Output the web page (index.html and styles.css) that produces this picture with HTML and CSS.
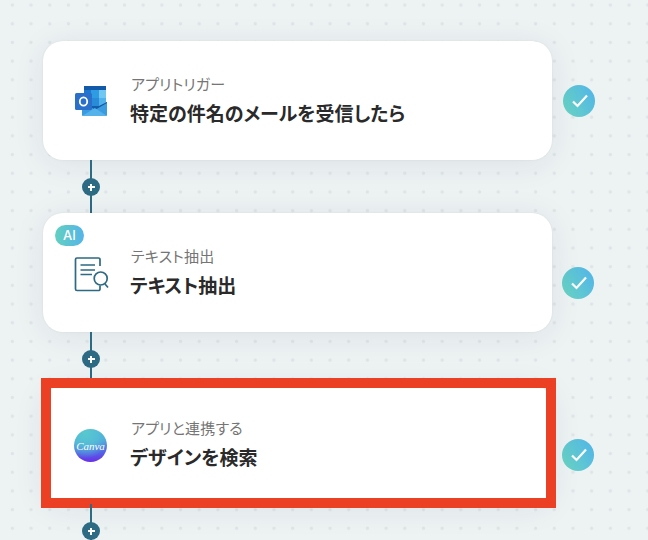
FILE: index.html
```html
<!DOCTYPE html>
<html lang="ja">
<head>
    <meta charset="UTF-8">
    <meta name="viewport" content="width=device-width, initial-scale=1.0">
    <title>フロー</title>
    <link rel="stylesheet" href="styles.css">
</head>
<body>
    <div class="flow">
        <div class="step">
            <div class="card">
                <svg class="icon" viewBox="0 0 36 36">
                    <rect x="12" y="3" width="22" height="29" rx="1" fill="#0f5fb0"/>
                    <rect x="12" y="3" width="22" height="4" fill="#1259a8"/>
                    <rect x="12" y="7" width="7" height="8" fill="#1f78cf"/>
                    <rect x="19" y="7" width="8" height="8" fill="#2f9be2"/>
                    <rect x="27" y="7" width="7" height="8" fill="#6fc7f2"/>
                    <rect x="12" y="15" width="7" height="8" fill="#1a6bbd"/>
                    <rect x="19" y="15" width="8" height="8" fill="#2a8bd8"/>
                    <rect x="27" y="15" width="7" height="8" fill="#4fb2ec"/>
                    <path d="M10 18 L22 26 L35 19 V32 a1 1 0 0 1 -1 1 H11 a1 1 0 0 1 -1 -1 Z" fill="#3a9be0"/>
                    <path d="M10 33 L23 25 L35 33 Z" fill="#55b2ea"/>
                    <path d="M23 25 L35 19 V20 L24.5 26 Z" fill="#15589e"/>
                    <rect x="3" y="10" width="17" height="17" rx="1.5" fill="#2a6fc9"/>
                    <ellipse cx="11.5" cy="18.5" rx="3.7" ry="4.2" fill="none" stroke="#fff" stroke-width="1.8"/>
                </svg>
                <div class="text">
                    <div class="label">アプリトリガー</div>
                    <div class="title">特定の件名のメールを受信したら</div>
                </div>
            </div>
            <div class="check check-first">
                <svg viewBox="0 0 32 32"><path d="M10 16.5 L14.5 21 L24 10.5" fill="none" stroke="#fff" stroke-width="2.2"/></svg>
            </div>
        </div>
        <div class="link"><span class="plus"></span></div>

        <div class="step">
            <div class="card">
                <span class="badge">AI</span>
                <svg class="icon" viewBox="0 0 36 36">
                    <path d="M28 11 V4.5 a1.5 1.5 0 0 0 -1.5 -1.5 H5 a1.5 1.5 0 0 0 -1.5 1.5 V34 a1.5 1.5 0 0 0 1.5 1.5 H26.5 a1.5 1.5 0 0 0 1.5 -1.5 V30.5" fill="none" stroke="#2d6a83" stroke-width="1.7"/>
                    <path d="M8.5 10 H23 M8.5 15 H23 M8.5 19.5 H20" fill="none" stroke="#2d6a83" stroke-width="1.7"/>
                    <circle cx="28.7" cy="23.5" r="6.5" fill="none" stroke="#2d6a83" stroke-width="1.7"/>
                    <path d="M33 29 L36 32.5" fill="none" stroke="#2d6a83" stroke-width="1.7"/>
                </svg>
                <div class="text">
                    <div class="label">テキスト抽出</div>
                    <div class="title">テキスト抽出</div>
                </div>
            </div>
            <div class="check">
                <svg viewBox="0 0 32 32"><path d="M10 16.5 L14.5 21 L24 10.5" fill="none" stroke="#fff" stroke-width="2.2"/></svg>
            </div>
        </div>
        <div class="link"><span class="plus"></span></div>

        <div class="step">
            <div class="card">
                <div class="canva"><span>Canva</span></div>
                <div class="text">
                    <div class="label">アプリと連携する</div>
                    <div class="title">デザインを検索</div>
                </div>
                <div class="highlight"></div>
            </div>
            <div class="check">
                <svg viewBox="0 0 32 32"><path d="M10 16.5 L14.5 21 L24 10.5" fill="none" stroke="#fff" stroke-width="2.2"/></svg>
            </div>
        </div>
        <div class="link"><span class="plus"></span></div>
    </div>
</body>
</html>
```
FILE: styles.css
```css
html, body {
    height: 100%;
}
body {
    margin: 0;
    overflow: hidden;
    font-family: "Noto Sans CJK JP", "Noto Sans", sans-serif;
    background-color: #edf2f3;
    background-image: radial-gradient(circle, #dfe5e7 1.2px, transparent 2.2px);
    background-size: 18.7px 18.7px;
    background-position: 3px -4.3px;
}
.flow {
    padding: 41px 0 0 43px;
}
.step {
    display: flex;
    align-items: flex-start;
}
.card {
    position: relative;
    width: 509px;
    height: 119px;
    box-sizing: border-box;
    padding-left: 29px;
    display: flex;
    align-items: center;
    gap: 22px;
    background: #fff;
    border-radius: 20px;
    box-shadow: 0 0 2px rgba(40, 70, 80, 0.09), 0 4px 32px rgba(40, 70, 80, 0.08);
}
.icon {
    width: 36px;
    height: 36px;
    flex: none;
    overflow: visible;
}
.text {
    display: flex;
    flex-direction: column;
    gap: 6px;
    padding-bottom: 1px;
}
.label {
    padding-left: 1px;
    font-size: 15px;
    line-height: 20px;
    letter-spacing: 0.2px;
    color: #757575;
    font-feature-settings: "palt";
}
.title {
    font-size: 19px;
    line-height: 26px;
    font-weight: 700;
    color: #2a2a2a;
    font-feature-settings: "palt";
}
.badge {
    position: absolute;
    left: 12px;
    top: 12px;
    width: 29px;
    height: 21px;
    border-radius: 11px;
    background: linear-gradient(90deg, #62d0c0, #56b4e8);
    color: #fff;
    font-family: "Inter", sans-serif;
    font-size: 13px;
    font-weight: 500;
    line-height: 21px;
    text-align: center;
}
.canva {
    width: 33px;
    height: 33px;
    margin: 2px 1px 0 2px;
    flex: none;
    border-radius: 50%;
    background:
        radial-gradient(circle at 35% 12%, #58c9cd 0, rgba(84, 190, 214, 0.9) 35%, rgba(80, 160, 220, 0) 70%),
        linear-gradient(180deg, #4fa6dc 30%, #5560e6 72%, #6a2fe8 100%);
    display: flex;
    align-items: center;
    justify-content: center;
}
.canva span {
    font-family: "Liberation Serif", serif;
    font-style: italic;
    font-size: 11px;
    color: #fff;
}
.highlight {
    position: absolute;
    left: -2px;
    right: -4px;
    top: -7px;
    bottom: -4px;
    border: 10px solid #ec4025;
}
.check {
    width: 32px;
    height: 32px;
    margin: 54px 0 0 10px;
    border-radius: 50%;
    background: linear-gradient(60deg, #6bd6c0, #50b3ea);
}
.check-first {
    margin: 44px 0 0 11px;
}
.check svg {
    display: block;
}
.link {
    position: relative;
    width: 2px;
    height: 53px;
    margin-left: 47px;
    background: #2d6a83;
}
.plus {
    position: absolute;
    left: -8px;
    top: 18px;
    width: 18px;
    height: 18px;
    border-radius: 50%;
    background:
        linear-gradient(#fff, #fff) center / 7px 2px no-repeat,
        linear-gradient(#fff, #fff) center / 2px 7px no-repeat,
        #2d6a83;
}
```
